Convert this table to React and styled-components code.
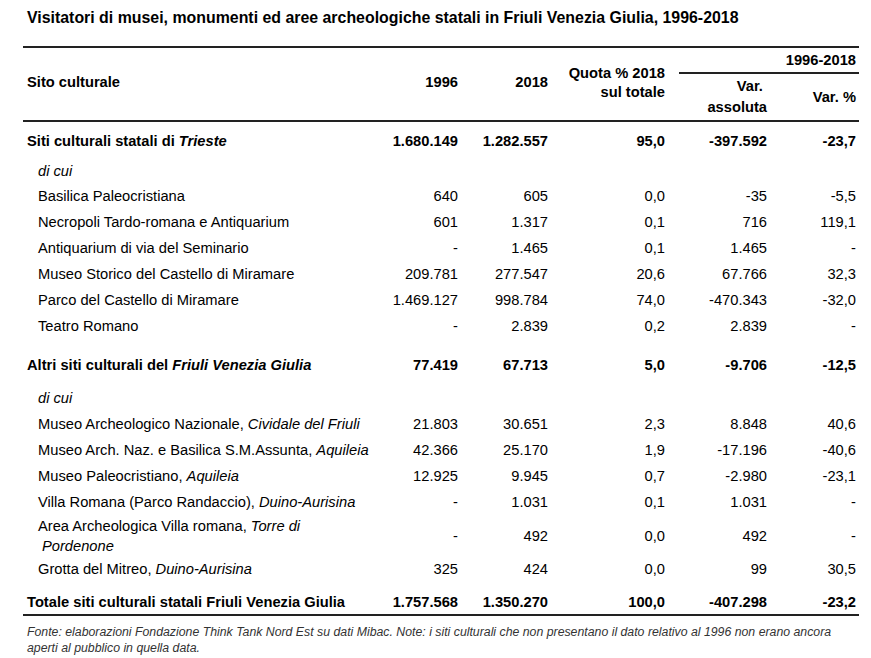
import React from "react";
import styled, { createGlobalStyle } from "styled-components";

const Global = createGlobalStyle`
  html, body { margin: 0; padding: 0; background: #fff; }
  body { font-family: "Liberation Sans", Arial, sans-serif; color: #000; }
`;

const Page = styled.div`
  width: 871px;
  padding: 8px 12px 0 23px;
  box-sizing: border-box;
`;

const Title = styled.h1`
  margin: 0 0 0 4px;
  font-size: 15.9px;
  line-height: 20px;
  font-weight: bold;
  white-space: nowrap;
`;

const Table = styled.table`
  margin-top: 18px;
  width: 836px;
  border-collapse: collapse;
  table-layout: fixed;
  font-size: 14.7px;
  border-top: 2px solid #222;
  border-bottom: 2px solid #222;
`;

const Head = styled.thead`
  border-bottom: 2px solid #222;
`;

const Th = styled.th`
  font-weight: bold;
  text-align: ${(p) => (p.$left ? "left" : "right")};
  padding: 0 ${(p) => (p.$left ? "0" : p.$pr || "3px")} ${(p) => p.$pb || "0"} ${(p) => (p.$left ? "4px" : "0")};
  vertical-align: middle;
  line-height: ${(p) => p.$lh || 19}px;
  height: ${(p) => p.$h || "auto"};
`;

const SpanHead = styled.div`
  margin-left: 11px;
  border-bottom: 2px solid #222;
  height: 24px;
  line-height: 24px;
  padding-right: 3px;
  box-sizing: content-box;
`;

const Tr = styled.tr`
  height: ${(p) => p.$h}px;
`;

const Spacer = styled.tr`
  height: ${(p) => p.$h}px;
  & > td { padding: 0; }
`;

const Name = styled.td`
  text-align: left;
  padding-left: ${(p) => (p.$indent ? (p.$wrap ? "19px" : "15px") : "4px")};
  text-indent: ${(p) => (p.$wrap ? "-4px" : "0")};
  font-weight: ${(p) => (p.$bold ? "bold" : "normal")};
  font-style: ${(p) => (p.$italic ? "italic" : "normal")};
  line-height: 20px;
  vertical-align: middle;
  white-space: ${(p) => (p.$wrap ? "normal" : "nowrap")};
  padding-right: 12px;
`;

const Num = styled.td`
  text-align: right;
  padding-right: 3px;
  font-weight: ${(p) => (p.$bold ? "bold" : "normal")};
  vertical-align: middle;
  white-space: nowrap;
`;

const Em = styled.i``;

const Note = styled.p`
  margin: 8px 0 0 4px;
  font-size: 12.3px;
  line-height: 16px;
  font-style: italic;
  color: #333;
  width: 830px;
`;

const rows = [
  { sp: 7 },
  { kind: "group", name: <>Siti culturali statali di <Em>Trieste</Em></>, v: ["1.680.149", "1.282.557", "95,0", "-397.592", "-23,7"] },
  { sp: 5 },
  { kind: "dicui", h: 24 },
  { name: "Basilica Paleocristiana", v: ["640", "605", "0,0", "-35", "-5,5"] },
  { name: "Necropoli Tardo-romana e Antiquarium", v: ["601", "1.317", "0,1", "716", "119,1"] },
  { name: "Antiquarium di via del Seminario", v: ["-", "1.465", "0,1", "1.465", "-"] },
  { name: "Museo Storico del Castello di Miramare", v: ["209.781", "277.547", "20,6", "67.766", "32,3"] },
  { name: "Parco del Castello di Miramare", v: ["1.469.127", "998.784", "74,0", "-470.343", "-32,0"] },
  { name: "Teatro Romano", v: ["-", "2.839", "0,2", "2.839", "-"] },
  { sp: 13 },
  { kind: "group", name: <>Altri siti culturali del <Em>Friuli Venezia Giulia</Em></>, v: ["77.419", "67.713", "5,0", "-9.706", "-12,5"] },
  { sp: 7 },
  { kind: "dicui", h: 26 },
  { name: <>Museo Archeologico Nazionale, <Em>Cividale del Friuli</Em></>, v: ["21.803", "30.651", "2,3", "8.848", "40,6"] },
  { name: <>Museo Arch. Naz. e Basilica S.M.Assunta, <Em>Aquileia</Em></>, v: ["42.366", "25.170", "1,9", "-17.196", "-40,6"] },
  { name: <>Museo Paleocristiano, <Em>Aquileia</Em></>, v: ["12.925", "9.945", "0,7", "-2.980", "-23,1"] },
  { name: <>Villa Romana (Parco Randaccio), <Em>Duino-Aurisina</Em></>, v: ["-", "1.031", "0,1", "1.031", "-"] },
  { name: <>Area Archeologica Villa romana, <Em>Torre di</Em> <Em>Pordenone</Em></>, v: ["-", "492", "0,0", "492", "-"], h: 42, wrap: true },
  { name: <>Grotta del Mitreo, <Em>Duino-Aurisina</Em></>, v: ["325", "424", "0,0", "99", "30,5"], h: 24 },
  { sp: 8 },
  { kind: "group", name: "Totale siti culturali statali Friuli Venezia Giulia", v: ["1.757.568", "1.350.270", "100,0", "-407.298", "-23,2"] },
];

export default function App() {
  return (
    <>
      <Global />
      <Page>
        <Title>Visitatori di musei, monumenti ed aree archeologiche statali in Friuli Venezia Giulia, 1996-2018</Title>
        <Table>
          <colgroup>
            <col style={{ width: 357 }} />
            <col style={{ width: 81 }} />
            <col style={{ width: 90 }} />
            <col style={{ width: 117 }} />
            <col style={{ width: 102 }} />
            <col style={{ width: 89 }} />
          </colgroup>
          <Head>
            <tr>
              <Th $left rowSpan={2} $pb="3px">Sito culturale</Th>
              <Th rowSpan={2} $pb="3px">1996</Th>
              <Th rowSpan={2} $pb="3px">2018</Th>
              <Th rowSpan={2} $lh={19} $pb="2px">Quota % 2018<br />sul totale</Th>
              <th colSpan={2} style={{ padding: 0, textAlign: "right", height: 26, verticalAlign: "bottom" }}>
                <SpanHead>1996-2018</SpanHead>
              </th>
            </tr>
            <tr>
              <Th $lh={21} $h="46px" $pr="3px">Var.&nbsp;<br />assoluta</Th>
              <Th $h="46px">Var. %</Th>
            </tr>
          </Head>
          <tbody>
            {rows.map((r, i) => {
              if (r.sp) return <Spacer key={i} $h={r.sp}><td colSpan={6} /></Spacer>;
              if (r.kind === "dicui")
                return (
                  <Tr key={i} $h={r.h}>
                    <Name $indent $italic>di cui</Name>
                    <td colSpan={5} />
                  </Tr>
                );
              const bold = r.kind === "group";
              return (
                <Tr key={i} $h={r.h || 26}>
                  <Name $bold={bold} $indent={!bold} $wrap={r.wrap}>{r.name}</Name>
                  {r.v.map((x, j) => (
                    <Num key={j} $bold={bold}>{x}</Num>
                  ))}
                </Tr>
              );
            })}
          </tbody>
        </Table>
        <Note>
          Fonte: elaborazioni Fondazione Think Tank Nord Est su dati Mibac. Note: i siti culturali che non presentano il dato relativo al 1996 non erano ancora aperti al pubblico in quella data.
        </Note>
      </Page>
    </>
  );
}
